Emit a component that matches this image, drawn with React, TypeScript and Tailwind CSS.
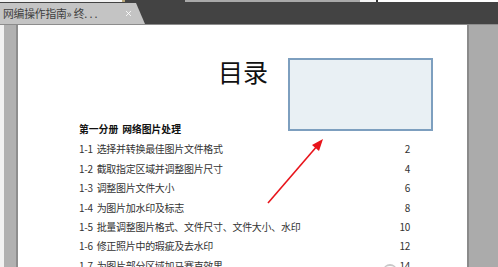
import { X } from 'lucide-react'

const cjk = { fontFamily: '"Noto Sans CJK SC", "Noto Sans", sans-serif' }

const rows = [
  { num: '1-1', label: '选择并转换最佳图片文件格式', page: '2' },
  { num: '1-2', label: '截取指定区域并调整图片尺寸', page: '4' },
  { num: '1-3', label: '调整图片文件大小', page: '6' },
  { num: '1-4', label: '为图片加水印及标志', page: '8' },
  { num: '1-5', label: '批量调整图片格式、文件尺寸、文件大小、水印', page: '10' },
  { num: '1-6', label: '修正照片中的瑕疵及去水印', page: '12' },
  { num: '1-7', label: '为图片部分区域加马赛克效果', page: '14' },
]

function TopStrip() {
  return (
    <div className="flex h-[2px] w-full">
      <div className="w-[122px] bg-[#f3f3f3]" />
      <div className="w-[3px] bg-[#b9a77a]" />
      <div className="w-[60px] bg-[#434343]" />
      <div className="w-[175px] bg-[#a9a9a9]" />
      <div className="w-[16px] bg-[#f5f5f5]" />
      <div className="w-[2px] bg-[#333]" />
      <div className="flex-1 bg-white" />
    </div>
  )
}

function TabBar() {
  return (
    <div className="h-[22px] bg-[#434343] flex items-end">
      <div
        className="h-[21px] w-[145px] bg-[#c4c4c4] flex items-center pl-[3px] pr-[12px]"
        style={{ clipPath: 'polygon(0 0, 136px 0, 145px 100%, 0 100%)' }}
      >
        <span className="text-[10.8px] leading-none text-[#404040] whitespace-nowrap tracking-[-0.2px]" style={cjk}>
          网编操作指南» 终. . .
        </span>
        <X size={9} strokeWidth={2.2} className="ml-auto text-white" />
      </div>
    </div>
  )
}

function Arrow() {
  // page coords (page starts at x=18, y=25)
  return (
    <svg className="absolute left-0 top-0 pointer-events-none" width="449" height="242">
      <line x1="250" y1="178" x2="300" y2="120" stroke="#e8141b" strokeWidth="1.6" />
      <polygon points="305,114 294,120 301,126" fill="#e8141b" />
    </svg>
  )
}

function TocPage() {
  return (
    <div className="relative flex-1 bg-white overflow-hidden" style={cjk}>
      <Arrow />
      <div className="pl-[61px] pt-[33px]">
        <div className="flex items-start h-[62px]">
          <div className="ml-[139px] text-[25px] leading-[25px] text-[#111] mt-[1px]">目录</div>
          <div className="ml-[20px] w-[145px] h-[73px] bg-[#e9f0f4] border-2 border-[#7d9fbf]" />
        </div>
        <div className="w-[331px] flex text-[9.8px] leading-[19.4px] font-bold text-[#111]">
          <span>第一分册</span>
          <span className="ml-[4px]">网络图片处理</span>
        </div>
        {rows.map(r => (
          <div key={r.num} className="w-[331px] flex items-center justify-between text-[10px] leading-[19.4px] text-[#333] tracking-[-0.3px]">
            <span className="whitespace-nowrap flex">
              <span>{r.num}</span>
              <span className="ml-[4px]">{r.label}</span>
            </span>
            <span className="flex items-center">
              {r.page === '14' && <span className="w-[14px] h-[8px] rounded-t-full border-t-2 border-[#c8c8c8] mr-[3px] mt-[4px]" />}
              {r.page}
            </span>
          </div>
        ))}
      </div>
    </div>
  )
}

export default function App() {
  return (
    <div className="w-[498px] h-[267px] overflow-hidden bg-white flex flex-col">
      <TopStrip />
      <TabBar />
      <div className="h-px bg-[#8c8c8c]" />
      <div className="flex flex-1 min-h-0">
        <div className="w-[4px] bg-[#f2f2f2]" />
        <div className="w-[12px] bg-[#b1b1b1]" />
        <div className="w-[2px] bg-[#8e8e8e]" />
        <TocPage />
        <div className="w-[2px] bg-[#8a8a8a]" />
        <div className="w-[29px] bg-[#ababab]" />
      </div>
    </div>
  )
}
